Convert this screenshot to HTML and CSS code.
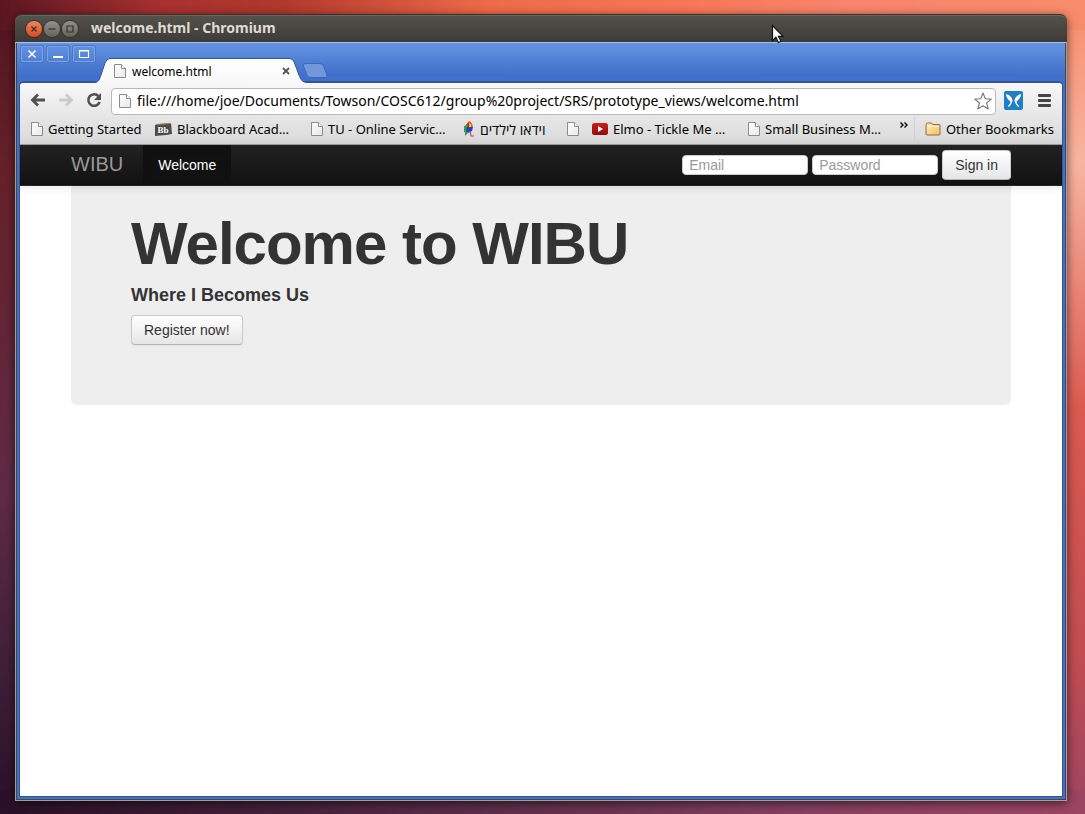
FILE: index.html
```html
<!DOCTYPE html>
<html lang="en">
<head>
<meta charset="utf-8">
<title>welcome.html - Chromium</title>
<link rel="stylesheet" href="styles.css">
</head>
<body>
<svg class="defs" width="0" height="0" aria-hidden="true">
  <defs>
    <linearGradient id="paper" x1="0" y1="0" x2="1" y2="1"><stop offset="0" stop-color="#fff"/><stop offset="1" stop-color="#e8e8e8"/></linearGradient>
    <linearGradient id="tabfill" x1="0" y1="0" x2="0" y2="1"><stop offset="0" stop-color="#fff"/><stop offset="1" stop-color="#f8f8f8"/></linearGradient>
    <linearGradient id="gold" x1="0" y1="0" x2="1" y2="1"><stop offset="0" stop-color="#ffeec0"/><stop offset="1" stop-color="#f4bd62"/></linearGradient>
    <linearGradient id="red" x1="0" y1="0" x2="0" y2="1"><stop offset="0" stop-color="#d01c18"/><stop offset="1" stop-color="#900c0c"/></linearGradient>
    <symbol id="page" viewBox="0 0 12 14"><path d="M.5.5h7l4 4v9H.5z" fill="url(#paper)" stroke="#8c8c8c"/><path d="M7.5.5v4h4" fill="#fff" stroke="#8c8c8c"/></symbol>
  </defs>
</svg>
<div class="window">
  <header class="titlebar">
    <div class="wm">
      <button class="wm-btn wm-close" aria-label="Close window"><svg width="16" height="16" viewBox="0 0 16 16"><path d="M5.5 5.5l5 5M10.5 5.5l-5 5"/></svg></button>
      <button class="wm-btn" aria-label="Minimize window"><svg width="16" height="16" viewBox="0 0 16 16"><path d="M4.500 8h7"/></svg></button>
      <button class="wm-btn" aria-label="Maximize window"><svg width="16" height="16" viewBox="0 0 16 16"><path d="M5 5h6v6h-6z"/></svg></button>
    </div>
    <span class="wm-title">welcome.html - Chromium</span>
    <svg class="cursor" width="14" height="20" viewBox="0 0 14 20"><path d="M1.500 1.500v15l3.400-3.200 2.500 5.200 2.500-1.200-2.500-5h4.600z" fill="#fff" stroke="#111" stroke-width="1.200"/></svg>
  </header>
  <div class="frame">
    <div class="tabstrip">
      <div class="ctl">
        <button class="ctl-btn" aria-label="Close"><svg width="22" height="16" viewBox="0 0 22 16"><path d="M7.500 4.500l7 7M14.500 4.500l-7 7" stroke-width="1.700"/></svg></button>
        <button class="ctl-btn" aria-label="Minimize"><svg width="22" height="16" viewBox="0 0 22 16"><path d="M6 11h10" stroke-width="2"/></svg></button>
        <button class="ctl-btn" aria-label="Maximize"><svg width="22" height="16" viewBox="0 0 22 16"><path d="M6.500 4.500h9v7h-9zM6 5h10" stroke-width="1.200"/></svg></button>
      </div>
      <div class="tab">
        <svg class="tab-shape" width="212" height="25" viewBox="0 0 212 25"><path d="M0 24.500C4 24 4.500 21 6 17L10 5Q11.500.5 15 .5H194Q198 .5 199.500 5L204 17C206 22 207 24 212 24.500V25H0z" fill="url(#tabfill)"/><path d="M0 24.500C4 24 4.500 21 6 17L10 5Q11.500.5 15 .5H194Q198 .5 199.500 5L204 17C206 22 207 24 212 24.500" fill="none" stroke="#2c55a4"/></svg>
        <div class="tab-body">
          <svg width="12" height="14"><use href="#page"/></svg>
          <span class="tab-title">welcome.html</span>
          <button class="tab-close" aria-label="Close tab"><svg width="8" height="8" viewBox="0 0 8 8"><path d="M1 1l6 6M7 1L1 7" stroke="#555" stroke-width="1.800"/></svg></button>
        </div>
      </div>
      <button class="newtab" aria-label="New tab"><svg width="28" height="17" viewBox="0 0 28 17"><path d="M4 1.500H19Q21.500 1.500 22.500 4L26 13Q26.500 15.500 24 15.500H10Q7 15.500 6 13L2.500 4Q2 1.500 4 1.500z" fill="#7297dc" stroke="#4168b8"/></svg></button>
    </div>
    <div class="browser">
      <div class="toolbar">
        <button class="tool" aria-label="Back"><svg width="16" height="14" viewBox="0 0 16 14"><path d="M15 7H3M8 1.500L2.500 7 8 12.500" fill="none" stroke="#505050" stroke-width="2.800"/></svg></button>
        <button class="tool" aria-label="Forward" disabled><svg width="16" height="14" viewBox="0 0 16 14"><path d="M1 7h12M8 1.500L13.500 7 8 12.500" fill="none" stroke="#cbcbcb" stroke-width="2.800"/></svg></button>
        <button class="tool" aria-label="Reload"><svg width="16" height="16" viewBox="0 0 16 16"><path d="M12.500 4.200A5.800 5.800 0 1 0 13.600 10" fill="none" stroke="#505050" stroke-width="2.500"/><path d="M15 1v7H8z" fill="#505050"/></svg></button>
        <div class="omnibox">
          <svg width="12" height="14"><use href="#page"/></svg>
          <input class="url" type="text" aria-label="Address" value="file:///home/joe/Documents/Towson/COSC612/group%20project/SRS/prototype_views/welcome.html">
          <button class="tool" aria-label="Bookmark this page"><svg width="20" height="18" viewBox="0 0 20 18"><path d="M10 1l2.300 5.800 6 .3-4.700 3.900 1.600 6L10 13.700 4.800 17l1.600-6-4.700-3.900 6-.3z" fill="#fff" stroke="#777" stroke-width="1.100" stroke-linejoin="round"/></svg></button>
        </div>
        <button class="tool" aria-label="Extension"><svg width="19" height="19" viewBox="0 0 19 19"><rect width="19" height="19" rx="2" fill="#1d7fc4"/><path d="M2 3C6 4 8.500 7 8.500 10Q7.500 14 4.500 16L4 15Q6.500 13 6.500 10.500C4 9 2 6 2 3zM17 3C13 4 10.500 7 10.500 10Q11.500 14 14.500 16L15 15Q12.500 13 12.500 10.500C15 9 17 6 17 3z" fill="#fff"/></svg></button>
        <button class="tool menu" aria-label="Menu"><svg width="13" height="13" viewBox="0 0 13 13"><path d="M1.300 1.500h10.400M1.300 6.500h10.400M1.300 11.500h10.400" stroke="#454545" stroke-width="2.800" stroke-linecap="round"/></svg></button>
      </div>
      <nav class="bookmarks" aria-label="Bookmarks">
        <a class="bm" href="#"><svg width="12" height="14"><use href="#page"/></svg><span>Getting Started</span></a>
        <a class="bm" href="#"><svg width="17" height="13" viewBox="0 0 17 13"><path d="M0 2l5-1 11-1 1 11-6 1-11 1z" fill="#4c4c4c"/><path d="M1 1.500L16 .5" stroke="#a88a40"/><text x="2.500" y="10" class="bb">Bb</text></svg><span>Blackboard Acad…</span></a>
        <a class="bm" href="#"><svg width="12" height="14"><use href="#page"/></svg><span>TU - Online Servic…</span></a>
        <a class="bm kids" href="#"><svg width="12" height="16" viewBox="0 0 12 16"><path d="M3 4l3-4 2 1 2 4-1 2H3z" fill="#e8641c"/><path d="M3 4l3-3v5H2z" fill="#d02a20"/><path d="M1 5l3-1v8l-3-1z" fill="#28a63c"/><path d="M4 6h6l-1 4-4 2-2-2z" fill="#2440d0"/><path d="M6 3h2v3H6z" fill="#f6cc40"/><path d="M2 11l3 1-3 3z" fill="#2a9c40"/><path d="M7 10l1 5h3" fill="none" stroke="#e03a46" stroke-width="1.200"/></svg><span lang="he" dir="rtl">וידאו לילדים</span></a>
        <a class="bm" href="#" aria-label="Untitled"><svg width="12" height="14"><use href="#page"/></svg></a>
        <a class="bm" href="#"><svg width="16" height="12" viewBox="0 0 16 12"><rect width="16" height="12" rx="2.500" fill="url(#red)"/><path d="M6 3v6l5-3z" fill="#fff"/></svg><span>Elmo - Tickle Me …</span></a>
        <a class="bm" href="#"><svg width="12" height="14"><use href="#page"/></svg><span>Small Business M…</span></a>
        <button class="tool more" aria-label="More bookmarks"><svg width="8" height="6" viewBox="0 0 8 6"><path d="M.5.5L3 3 .5 5.500M4.500.5L7 3 4.500 5.500" fill="none" stroke="#000" stroke-width="1.400"/></svg></button>
        <a class="bm other" href="#"><svg width="16" height="14" viewBox="0 0 16 14"><path d="M1 3Q1 1 2.500 1H6Q7 1 7.500 2.500H14Q15 2.500 15 3.500V12Q15 13 14 13H2Q1 13 1 12z" fill="url(#gold)" stroke="#946b3a"/><path d="M2 4.500h12" stroke="#fff3d0"/></svg><span>Other Bookmarks</span></a>
      </nav>
      <main class="page">
        <div class="navbar">
          <div class="container nav-inner">
            <a class="brand" href="#">WIBU</a>
            <a class="nav-link" href="#">Welcome</a>
            <form class="signin">
              <input class="field" type="text" placeholder="Email" aria-label="Email">
              <input class="field" type="password" placeholder="Password" aria-label="Password">
              <button class="btn" type="button">Sign in</button>
            </form>
          </div>
        </div>
        <section class="container hero">
          <h1>Welcome to WIBU</h1>
          <h2>Where I Becomes Us</h2>
          <button class="btn" type="button">Register now!</button>
        </section>
      </main>
    </div>
  </div>
</div>
</body>
</html>
```
FILE: styles.css
```css
* { box-sizing: border-box; }
body {
  margin: 0;
  min-height: 100vh;
  padding: 14px 18px 13px 15px;
  display: flex;
  font-family: "Noto Sans", "Open Sans", sans-serif;
  font-size: 13px;
  color: #000;
  /* wallpaper: one strip along each edge of the desktop */
  background:
    linear-gradient(to right, #5a1620, #a83030 15%, #b0382c 26%, #ee6a48 45%, #f87858 65%, #f8846c 78%, #f88c6a) top / 100% 30px no-repeat,
    linear-gradient(to right, #2a1028, #42203a 25%, #62304c 50%, #854060 75%, #9c4562) bottom / 100% 24px no-repeat,
    linear-gradient(#52141f, #66202a 20%, #602a44 60%, #42203a 80%, #2a1028) left / 24px 100% no-repeat,
    linear-gradient(#f88c6a, #f8b4a0 20%, #dc5a50 50%, #c24c50 80%, #9c4562) right / 24px 100% no-repeat,
    #42203a;
}
button { border: 0; padding: 0; background: none; font: inherit; color: inherit; }
svg { display: block; flex: none; }
a { text-decoration: none; color: inherit; }
.defs { position: absolute; }

.window {
  flex: 1;
  display: flex;
  flex-direction: column;
  min-width: 0;
  border-radius: 7px 7px 0 0;
  box-shadow: 0 2px 10px rgba(0, 0, 0, 0.6);
}
.titlebar {
  position: relative;
  display: flex;
  align-items: center;
  gap: 13px;
  height: 28px;
  padding: 0 11px;
  border-top: 1px solid #34332f;
  border-radius: 7px 7px 0 0;
  background: linear-gradient(#53524b, #3c3b37);
  box-shadow: inset 0 1px 0 #68665e;
}
.wm { display: flex; gap: 2px; }
.wm-btn {
  width: 16px;
  height: 16px;
  border-radius: 50%;
  background: linear-gradient(#92908a, #65635c);
  box-shadow: 0 0 0 1px #33322e;
}
.wm-close { background: linear-gradient(#f4845c, #dc4a1c); }
.wm-btn path { fill: none; stroke: #33322e; stroke-width: 1.2; }
.wm-title { font-size: 14px; line-height: 18px; padding-bottom: 2px; font-weight: 700; color: #dfdbd2; white-space: nowrap; }
.cursor { position: absolute; left: 756px; top: 9px; }

.frame {
  flex: 1;
  display: flex;
  flex-direction: column;
  padding: 0 4px 4px;
  border: 1px solid #a29d98;
  border-top-color: #a9c0e8;
  border-width: 1px 1px 1px 1px;
  background: linear-gradient(#6494e0, #4070cb 32px);
  box-shadow: inset 1px -1px 0 #44464c, inset -1px 0 0 #44464c;
}
.tabstrip { display: flex; height: 39px; }
.ctl { display: flex; gap: 4px; padding: 3px 0 0 1px; }
.ctl-btn {
  width: 22px;
  height: 16px;
  border: 1px solid #7ea4e6;
  border-radius: 2px;
  display: flex;
  align-items: center;
  justify-content: center;
  box-shadow: 0 0 0 1px #4a76c6;
}
.ctl-btn path { fill: none; stroke: #fff; }
.tab { position: relative; width: 212px; height: 25px; margin-top: 15px; }
.tab-shape { position: absolute; left: 0; top: 0; }
.tab-body {
  position: relative;
  display: flex;
  align-items: center;
  gap: 6px;
  height: 26px;
  padding: 0 17px 0 19px;
}
.tab-title { flex: 1; font-size: 12px; }
.newtab { align-self: flex-start; margin-top: 19px; margin-left: -6px; }

.browser {
  flex: 1;
  display: flex;
  flex-direction: column;
  border-top: 1px solid #2c55a4;
  border-radius: 4px 4px 0 0;
  background: #fff;
  box-shadow: 0 0 0 1px #34549a;
  overflow: hidden;
}
.toolbar {
  display: flex;
  align-items: center;
  gap: 12px;
  height: 34px;
  padding: 0 11px 0 10px;
  background: linear-gradient(#f8f8f8, #e6e6e6);
}
.omnibox {
  flex: 1;
  display: flex;
  align-items: center;
  gap: 6px;
  height: 27px;
  margin: 2px -4px 0 -3px;
  padding: 0 2px 0 7px;
  border: 1px solid #b8b8b8;
  border-radius: 4px;
  background: #fff;
}
.url { flex: 1; min-width: 0; border: 0; padding: 0; font: inherit; font-size: 14px; line-height: 20px; background: none; outline: 0; }
.menu { margin-left: 3px; }

.bookmarks {
  display: grid;
  grid-template-columns: 124px 156px 152px 104px 25px 156px 152px 14px 1fr;
  height: 28px;
  padding: 0 8px 3px 11px;
  border-bottom: 1px solid #a0a0a0;
  background: linear-gradient(#e6e6e6, #dadada);
}
.bm { display: flex; align-items: center; gap: 5px; white-space: nowrap; }
.kids { font-size: 14px; }
.bb { font: 700 9px "Liberation Serif", serif; fill: #fff; }
.more { align-self: start; margin: 5px 0 0; }
.other { border-left: 1px solid #ccd2e4; justify-content: flex-end; }

.page {
  flex: 1;
  font-family: "Liberation Sans", Arial, sans-serif;
  font-size: 14px;
  line-height: 20px;
  color: #333;
}
.container { width: 90.3%; max-width: 940px; margin: 0 auto; }
.navbar {
  position: relative;
  background: linear-gradient(#222, #111);
  border-bottom: 1px solid #252525;
  box-shadow: 0 1px 10px rgba(0, 0, 0, 0.1);
}
.nav-inner { display: flex; height: 40px; }
.brand { padding: 9px 20px 11px 0; font-size: 20px; font-weight: 400; color: #999; }
.nav-link { padding: 10px 15px; color: #fff; background: #111; box-shadow: inset 0 3px 8px rgba(0, 0, 0, 0.125); }
.signin { display: flex; align-items: center; gap: 4px; margin-left: auto; }
.field {
  width: 126px;
  height: 20px;
  padding: 0 6px;
  border: 1px solid #ccc;
  border-radius: 4px;
  font: inherit;
  background: #fff;
}
.field::placeholder { color: #999; }
.btn {
  height: 30px;
  padding: 0 12px;
  border: 1px solid #ccc;
  border-bottom-color: #b3b3b3;
  border-radius: 4px;
  color: #333;
  background: linear-gradient(#fff, #e6e6e6);
  box-shadow: 0 1px 2px rgba(0, 0, 0, 0.05);
}
.hero { padding: 28px 60px 60px; border-radius: 0 0 6px 6px; background: #eee; }
.hero h1 { margin: 0 0 9px; font-size: 60px; line-height: 60px; letter-spacing: -1px; }
.hero h2 { margin: 0 0 7px; font-size: 18px; line-height: 25px; }
```
